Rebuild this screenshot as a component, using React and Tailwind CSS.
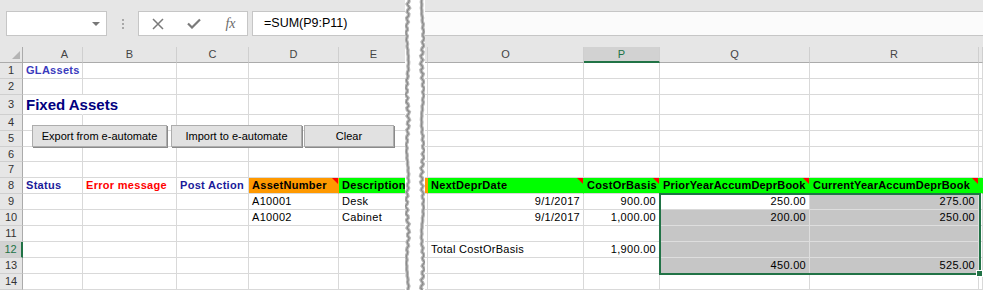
import React from "react";

// row heights of rows 1..14 (px, gridline included)
const ROWS = [16, 16, 20, 16, 16, 15, 16, 16, 16, 16, 16, 16, 16, 16];
const ROW_H = { 15: "h-[15px]", 16: "h-[16px]", 20: "h-[20px]" };

const GRID = "border-r-[#d9d9d9] border-b-[#d9d9d9]";
const GREEN = "border-r-[#00ff00] border-b-[#d9d9d9]";
const ORANGE = "border-r-[#ff9900] border-b-[#d9d9d9]";
const SEL = "border-r-[#dedede] border-b-[#dedede]";

function Tri() {
  return (
    <span className="absolute right-0 top-0 w-0 h-0 border-l-[6px] border-l-transparent border-t-[6px] border-t-[#ff0000]" />
  );
}

function Cell({ w, bc = GRID, pad = "px-[3px]", right, tri, visible, className = "", children }) {
  return (
    <div
      className={`${w} ${bc} ${pad} shrink-0 h-full relative flex items-center border-r border-b whitespace-nowrap ${
        visible ? "overflow-visible z-10" : "overflow-hidden"
      } ${right ? "justify-end" : ""} ${className}`}
    >
      {children}
      {tri && <Tri />}
    </div>
  );
}

function ColHead({ w, active, className = "", children }) {
  return (
    <div
      className={`${w} shrink-0 h-full flex items-center justify-center border-r border-r-[#cfcfcf] ${
        active
          ? "bg-[#d2d2d2] text-[#217346] border-b-2 border-b-[#217346]"
          : "border-b border-b-[#ababab] text-[#444]"
      } ${className}`}
    >
      {children}
    </div>
  );
}

function RowHead({ n }) {
  const active = n === 12;
  return (
    <div
      className={`w-[23px] shrink-0 h-full flex items-center justify-center border-b border-b-[#cfcfcf] ${
        active
          ? "bg-[#d2d2d2] text-[#217346] border-r-2 border-r-[#217346]"
          : "bg-[#e6e6e6] text-[#333] border-r border-r-[#ababab]"
      }`}
    >
      {n}
    </div>
  );
}

const LW = ["w-[60px]", "w-[94px]", "w-[72px]", "w-[90px]", "w-[70px]"];

function leftCells(r) {
  const [A, B, C, D, E] = LW;
  if (r === 1)
    return [
      <Cell key="a" w={A} className="font-bold text-[#3b3bbd] tracking-[0.3px]">GLAssets</Cell>,
      <Cell key="b" w={B} />, <Cell key="c" w={C} />, <Cell key="d" w={D} />, <Cell key="e" w={E} />,
    ];
  if (r === 3)
    return [
      <Cell key="a" w={A} visible bc="border-r-transparent border-b-[#d9d9d9]" className="font-bold text-[15px] text-[#000080]">
        Fixed Assets
      </Cell>,
      <Cell key="b" w={B} />, <Cell key="c" w={C} />, <Cell key="d" w={D} />, <Cell key="e" w={E} />,
    ];
  if (r === 8)
    return [
      <Cell key="a" w={A} className="font-bold text-[#1a1a9a] tracking-[0.3px]">Status</Cell>,
      <Cell key="b" w={B} className="font-bold text-[#ff0000] tracking-[0.3px]">Error message</Cell>,
      <Cell key="c" w={C} className="font-bold text-[#1a1a9a] tracking-[0.3px]">Post Action</Cell>,
      <Cell key="d" w={D} bc={ORANGE} tri className="bg-[#ff9900] font-bold tracking-[0.3px]">AssetNumber</Cell>,
      <Cell key="e" w={E} bc={GREEN} className="bg-[#00ff00] font-bold tracking-[0.3px]">Description</Cell>,
    ];
  if (r === 9 || r === 10)
    return [
      <Cell key="a" w={A} />, <Cell key="b" w={B} />, <Cell key="c" w={C} />,
      <Cell key="d" w={D} className="tracking-[0.3px]">{r === 9 ? "A10001" : "A10002"}</Cell>,
      <Cell key="e" w={E} className="tracking-[0.3px]">{r === 9 ? "Desk" : "Cabinet"}</Cell>,
    ];
  return LW.map((w, i) => <Cell key={i} w={w} />);
}

const RW = { N: "w-[3px]", O: "w-[156px]", P: "w-[76px]", Q: "w-[150px]", R: "w-[169px]", S: "w-[4px]" };

function rightCells(r) {
  const gray = "bg-[#c6c6c6]";
  const num = "tracking-[0.3px]";
  const row = {
    N: <Cell key="n" w={RW.N} pad="px-0" />,
    O: <Cell key="o" w={RW.O} />,
    P: <Cell key="p" w={RW.P} />,
    Q: <Cell key="q" w={RW.Q} />,
    R: <Cell key="r" w={RW.R} />,
    S: <Cell key="s" w={RW.S} pad="px-0" />,
  };
  if (r === 8) {
    row.N = <Cell key="n" w={RW.N} pad="px-0" bc={ORANGE} className="bg-[#ff9900]" />;
    row.O = <Cell key="o" w={RW.O} bc={GREEN} tri className="bg-[#00ff00] font-bold tracking-[0.3px]">NextDeprDate</Cell>;
    row.P = <Cell key="p" w={RW.P} bc={GREEN} tri className="bg-[#00ff00] font-bold tracking-[0.3px]">CostOrBasis</Cell>;
    row.Q = <Cell key="q" w={RW.Q} bc={GREEN} tri className="bg-[#00ff00] font-bold tracking-[0.2px]">PriorYearAccumDeprBook</Cell>;
    row.R = <Cell key="r" w={RW.R} bc={GREEN} tri className="bg-[#00ff00] font-bold tracking-[0.2px]">CurrentYearAccumDeprBook</Cell>;
    row.S = <Cell key="s" w={RW.S} pad="px-0" bc={GREEN} className="bg-[#00ff00]" />;
  }
  if (r === 9 || r === 10) {
    row.O = <Cell key="o" w={RW.O} right className={num}>9/1/2017</Cell>;
    row.P = <Cell key="p" w={RW.P} right className={num}>{r === 9 ? "900.00" : "1,000.00"}</Cell>;
    row.Q =
      r === 9 ? (
        <Cell key="q" w={RW.Q} right className={num}>250.00</Cell>
      ) : (
        <Cell key="q" w={RW.Q} right bc={SEL} className={`${gray} ${num}`}>200.00</Cell>
      );
    row.R = <Cell key="r" w={RW.R} right bc={SEL} className={`${gray} ${num}`}>{r === 9 ? "275.00" : "250.00"}</Cell>;
  }
  if (r >= 11 && r <= 13) {
    row.Q = <Cell key="q" w={RW.Q} right bc={SEL} className={`${gray} ${num}`}>{r === 13 ? "450.00" : ""}</Cell>;
    row.R = <Cell key="r" w={RW.R} right bc={SEL} className={`${gray} ${num}`}>{r === 13 ? "525.00" : ""}</Cell>;
  }
  if (r === 12) {
    row.O = <Cell key="o" w={RW.O} className={num}>Total CostOrBasis</Cell>;
    row.P = <Cell key="p" w={RW.P} right className={num}>1,900.00</Cell>;
  }
  return [row.N, row.O, row.P, row.Q, row.R, row.S];
}

function SheetButton({ className, children }) {
  return (
    <div
      className={`absolute h-[22px] flex items-center justify-center bg-[#e1e1e1] border border-[#adadad] shadow-[1px_1px_0_#8a8a8a] text-[11px] text-black ${className}`}
    >
      {children}
    </div>
  );
}

function LeftPanel() {
  return (
    <div className="w-[405px] shrink-0 h-full overflow-hidden relative flex flex-col">
      {/* formula bar */}
      <div className="h-[47px] shrink-0 bg-[#e6e6e6] flex items-start pt-[11px] pl-[6px]">
        <div className="w-[101px] h-[25px] bg-white border border-[#c6c6c6] flex items-center justify-end pr-[6px]">
          <span className="w-0 h-0 border-l-[4px] border-r-[4px] border-t-[4px] border-l-transparent border-r-transparent border-t-[#777]" />
        </div>
        <div className="w-[31px] h-[25px] flex flex-col items-center justify-center gap-[2px]">
          <span className="w-[2px] h-[2px] bg-[#a8a8a8]" />
          <span className="w-[2px] h-[2px] bg-[#a8a8a8]" />
          <span className="w-[2px] h-[2px] bg-[#a8a8a8]" />
        </div>
        <div className="w-[110px] h-[25px] bg-white border border-[#c6c6c6] flex items-center">
          <div className="w-[38px] flex justify-center">
            <svg width="12" height="12" viewBox="0 0 12 12">
              <path d="M1 1 L11 11 M11 1 L1 11" stroke="#7a7a7a" strokeWidth="1.5" fill="none" />
            </svg>
          </div>
          <div className="w-[33px] flex justify-center">
            <svg width="14" height="11" viewBox="0 0 14 11">
              <path d="M1 5.5 L5 9.5 L13 1.5" stroke="#7a7a7a" strokeWidth="2.2" fill="none" />
            </svg>
          </div>
          <div className="flex-1 flex justify-center pl-[4px] font-['Liberation_Serif',serif] italic text-[14px] text-[#6a6a6a]">
            fx
          </div>
        </div>
        <div className="ml-[4px] flex-1 h-[25px] bg-white border-y border-l border-[#c6c6c6] flex items-center pl-[11px] text-[12.5px] text-black">
          =SUM(P9:P11)
        </div>
      </div>

      {/* column headers */}
      <div className="h-[16px] shrink-0 flex bg-[#e6e6e6]">
        <div className="w-[23px] shrink-0 h-full relative border-r border-r-[#ababab] border-b border-b-[#ababab]">
          <svg className="absolute right-[2px] bottom-[3px]" width="8" height="8" viewBox="0 0 8 8">
            <path d="M8 0 L8 8 L0 8 Z" fill="#b4b4b4" />
          </svg>
        </div>
        <ColHead w="w-[60px]" className="pl-[24px]">A</ColHead>
        <ColHead w="w-[94px]">B</ColHead>
        <ColHead w="w-[72px]">C</ColHead>
        <ColHead w="w-[90px]">D</ColHead>
        <ColHead w="w-[70px]">E</ColHead>
      </div>

      {ROWS.map((h, i) => (
        <div key={i} className={`${ROW_H[h]} shrink-0 flex`}>
          <RowHead n={i + 1} />
          {leftCells(i + 1)}
        </div>
      ))}

      <SheetButton className="left-[32px] top-[125px] w-[135px]">Export from e-automate</SheetButton>
      <SheetButton className="left-[171px] top-[125px] w-[131px]">Import to e-automate</SheetButton>
      <SheetButton className="left-[304px] top-[125px] w-[90px]">Clear</SheetButton>
    </div>
  );
}

function RightPanel() {
  return (
    <div className="flex-1 h-full overflow-hidden relative flex flex-col">
      <div className="h-[47px] shrink-0 bg-[#e6e6e6] pt-[11px]">
        <div className="h-[25px] bg-[#fbfbfb] border-y border-[#c6c6c6]" />
      </div>
      <div className="h-[16px] shrink-0 flex bg-[#e6e6e6]">
        <ColHead w={RW.N} />
        <ColHead w={RW.O}>O</ColHead>
        <ColHead w={RW.P} active>P</ColHead>
        <ColHead w={RW.Q}>Q</ColHead>
        <ColHead w={RW.R}>R</ColHead>
        <ColHead w={RW.S} />
      </div>
      {ROWS.map((h, i) => (
        <div key={i} className={`${ROW_H[h]} shrink-0 flex`}>
          {rightCells(i + 1)}
        </div>
      ))}

      {/* selection Q9:R13 */}
      <div className="absolute left-[234px] top-[193px] w-[322px] h-[82px] border-2 border-[#217346] z-20 pointer-events-none" />
      <div className="absolute left-[551px] top-[270px] w-[7px] h-[7px] bg-[#217346] border border-white z-30" />
    </div>
  );
}

function Tear() {
  const edge = (base, seed) => {
    const pts = [];
    for (let y = 0; y <= 290; y += 2) {
      const j =
        Math.sin(y * 0.9 + seed) * 0.7 +
        Math.sin(y * 2.3 + seed * 2) * 0.5 +
        Math.sin(y * 0.11 + seed) * 0.9;
      pts.push([base + j, y]);
    }
    return pts;
  };
  const L = edge(2.5, 1);
  const R = edge(17.5, 4);
  const line = (arr) => "M" + arr.map(([x, y]) => `${x.toFixed(2)} ${y}`).join(" L");
  const fill =
    line(L) + " L" + R.slice().reverse().map(([x, y]) => `${x.toFixed(2)} ${y}`).join(" L") + " Z";
  return (
    <svg className="shrink-0" width="20" height="290" viewBox="0 0 20 290">
      <rect x="0" y="0" width="20" height="290" fill="#ffffff" />
      <path d={fill} fill="#ffffff" />
      <path d={line(L)} stroke="#b8b8b8" strokeWidth="3.5" fill="none" />
      <path d={line(L)} stroke="#8a8a8a" strokeWidth="1.2" fill="none" />
      <path d={line(R)} stroke="#b8b8b8" strokeWidth="3.5" fill="none" />
      <path d={line(R)} stroke="#8a8a8a" strokeWidth="1.2" fill="none" />
    </svg>
  );
}

export default function App() {
  return (
    <div className="w-[983px] h-[290px] overflow-hidden bg-white flex font-['Liberation_Sans',Arial,sans-serif] text-[11px] text-black leading-none">
      <LeftPanel />
      <Tear />
      <RightPanel />
    </div>
  );
}
